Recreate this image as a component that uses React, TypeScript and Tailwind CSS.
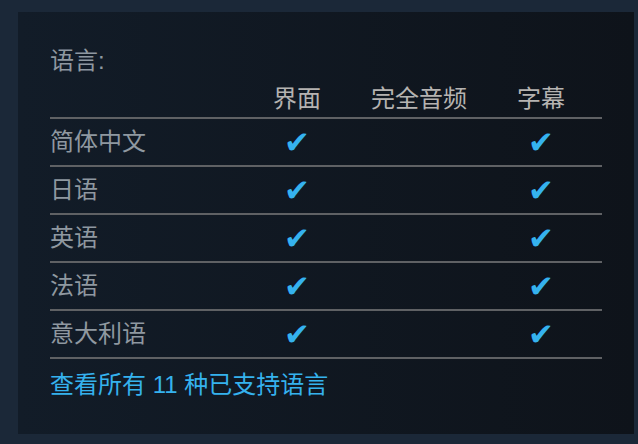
import React from 'react';

const rows = [
  { name: '简体中文', ui: true, audio: false, subs: true },
  { name: '日语', ui: true, audio: false, subs: true },
  { name: '英语', ui: true, audio: false, subs: true },
  { name: '法语', ui: true, audio: false, subs: true },
  { name: '意大利语', ui: true, audio: false, subs: true },
];

const Check = ({ on }: { on: boolean }) => (
  <div className="w-[122px] flex justify-center">
    {on && (
      <span className="text-[#35b2ee] text-[31px] leading-none" style={{ fontFamily: '"DejaVu Sans", sans-serif' }}>
        ✔
      </span>
    )}
  </div>
);

export default function App() {
  return (
    <div
      className="w-[638px] h-[444px] bg-[#1b2838] pt-[12px] pl-[18px]"
      style={{ fontFamily: '"Liberation Sans", "Noto Sans CJK SC", sans-serif' }}
    >
      {/* panel */}
      <div className="w-[616px] h-[422px] bg-gradient-to-r from-[#121c28] to-[#0e131a] px-[32px] pt-[36px]">
        <div className="text-[24px] leading-[26px] text-[#8f98a0]">语言:</div>

        {/* header */}
        <div className="w-[552px] flex items-end h-[45px] pb-[5px] border-b-2 border-[#5f6164] text-[24px] leading-[26px] text-[#b5b3b1]">
          <div className="w-[186px]" />
          <div className="w-[122px] text-center">界面</div>
          <div className="w-[122px] text-center">完全音频</div>
          <div className="w-[122px] text-center">字幕</div>
        </div>

        {rows.map((r) => (
          <div key={r.name} className="w-[552px] flex items-center h-[48px] border-b-2 border-[#5f6164]">
            <div className="w-[186px] text-[24px] leading-[26px] text-[#8f98a0]">{r.name}</div>
            <Check on={r.ui} />
            <Check on={r.audio} />
            <Check on={r.subs} />
          </div>
        ))}

        <div className="pt-[13px] text-[24px] leading-[26px] text-[#35b2ee]">查看所有 11 种已支持语言</div>
      </div>
    </div>
  );
}
